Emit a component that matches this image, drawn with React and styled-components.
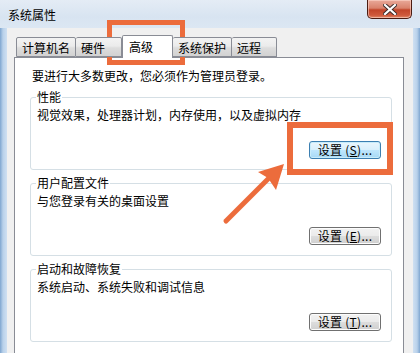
import React from "react";
import styled, { createGlobalStyle } from "styled-components";

const FONT = `"Noto Sans CJK SC", "Liberation Sans", sans-serif`;
const ORANGE = "#ec6c3c";

const GlobalStyle = createGlobalStyle`
  html, body {
    margin: 0;
    padding: 0;
    background: #dce7f3;
  }
  body {
    font-family: ${FONT};
    font-size: 12px;
    color: #000;
  }
`;

const TABS = [
  { label: "计算机名", width: 60 },
  { label: "硬件", width: 46 },
  { label: "高级", width: 51, active: true },
  { label: "系统保护", width: 59 },
  { label: "远程", width: 45 },
];

const GROUPS = [
  {
    title: "性能",
    text: "视觉效果，处理器计划，内存使用，以及虚拟内存",
    key: "S",
    focused: true,
  },
  { title: "用户配置文件", text: "与您登录有关的桌面设置", key: "E" },
  { title: "启动和故障恢复", text: "系统启动、系统失败和调试信息", key: "T" },
];

export default function App() {
  return (
    <>
      <GlobalStyle />
      <StyledWindow>
        <StyledTitleBar>
          <StyledTitle>系统属性</StyledTitle>
          <StyledClose>
            <svg width="14" height="11" viewBox="0 0 14 11">
              <path
                d="M2 1 L12 10 M12 1 L2 10"
                stroke="#3a2a28"
                strokeWidth="4"
                strokeLinecap="square"
              />
              <path
                d="M2 1 L12 10 M12 1 L2 10"
                stroke="#fff"
                strokeWidth="2.2"
                strokeLinecap="square"
              />
            </svg>
          </StyledClose>
        </StyledTitleBar>
        <StyledClient>
          <StyledTabList>
            {TABS.map((tab) => (
              <StyledTab key={tab.label} $active={tab.active} $width={tab.width}>
                {tab.label}
              </StyledTab>
            ))}
          </StyledTabList>
          <StyledPanel>
            <StyledIntro>要进行大多数更改，您必须作为管理员登录。</StyledIntro>
            {GROUPS.map((group) => (
              <StyledGroup key={group.title}>
                <StyledLegend>{group.title}</StyledLegend>
                <StyledGroupText>{group.text}</StyledGroupText>
                <StyledButtonRow>
                  <StyledButton $focused={group.focused}>
                    设置 (<u>{group.key}</u>)...
                  </StyledButton>
                </StyledButtonRow>
              </StyledGroup>
            ))}
          </StyledPanel>
        </StyledClient>
        <StyledOverlay width="420" height="353" viewBox="0 0 420 353">
          <rect x="109.5" y="22.5" width="73" height="40" fill="none" stroke={ORANGE} strokeWidth="5" />
          <rect x="290" y="125" width="100" height="47" fill="none" stroke={ORANGE} strokeWidth="6" />
          <line x1="226" y1="221" x2="272" y2="175" stroke={ORANGE} strokeWidth="5" strokeLinecap="round" />
          <polygon points="284,164 258,172 268,178 276,190" fill={ORANGE} />
        </StyledOverlay>
      </StyledWindow>
    </>
  );
}

const StyledWindow = styled.div`
  position: relative;
  width: 420px;
  height: 353px;
  overflow: hidden;
  display: flex;
  flex-direction: column;
  background: linear-gradient(
    90deg,
    #7fa6d0 0px,
    #b9d1ea 3px,
    #cfe0f2 7px,
    #d6e3f1 50%,
    #cfe0f2 calc(100% - 7px),
    #b9d1ea calc(100% - 3px),
    #7fa6d0 100%
  );
`;

const StyledTitleBar = styled.div`
  height: 28px;
  display: flex;
  align-items: flex-start;
  padding-left: 8px;
  background: linear-gradient(180deg, #e4ecf5 0%, #d8e4f1 60%, #dce7f3 100%);
`;

const StyledTitle = styled.div`
  margin-top: 7px;
  font-size: 12px;
  line-height: 16px;
  color: #000;
`;

const StyledClose = styled.div`
  margin-left: auto;
  margin-right: 8px;
  width: 45px;
  height: 19px;
  box-sizing: border-box;
  border: 1px solid #4a1c12;
  border-top: none;
  border-radius: 0 0 5px 5px;
  display: flex;
  align-items: center;
  justify-content: center;
  background: linear-gradient(
    180deg,
    #e9a99a 0%,
    #d9826c 45%,
    #c2452a 55%,
    #cf5a3c 85%,
    #e08a6a 100%
  );
  box-shadow: inset 0 0 0 1px rgba(255, 220, 210, 0.55);
`;

const StyledClient = styled.div`
  flex: 1;
  margin: 0 7px;
  padding-top: 7px;
  background: #f0f0f0;
  display: flex;
  flex-direction: column;
`;

const StyledTabList = styled.div`
  display: flex;
  align-items: flex-end;
  height: 23px;
  padding-left: 9px;
  position: relative;
  z-index: 1;
  margin-bottom: -1px;
`;

const StyledTab = styled.div`
  box-sizing: border-box;
  width: ${(p) => p.$width}px;
  height: ${(p) => (p.$active ? 23 : 20)}px;
  margin-bottom: ${(p) => (p.$active ? 0 : 1)}px;
  padding: ${(p) => (p.$active ? "3px 0 0 6px" : "2px 0 0 5px")};
  border: 1px solid #898c95;
  border-bottom: ${(p) => (p.$active ? "none" : "1px solid #898c95")};
  border-left-width: ${(p) => (p.$active ? 1 : 0)}px;
  border-radius: 2px 2px 0 0;
  font-size: 12px;
  line-height: 16px;
  white-space: nowrap;
  background: ${(p) =>
    p.$active
      ? "#ffffff"
      : "linear-gradient(180deg, #f3f3f3 0%, #ebebeb 45%, #dddddd 55%, #d2d2d2 100%)"};
  &:first-child {
    border-left-width: 1px;
  }
`;

const StyledPanel = styled.div`
  flex: 1;
  margin: 0 9px 0 7px;
  border: 1px solid #898c95;
  border-bottom: none;
  background: #ffffff;
  padding: 11px 11px 0 15px;
  display: flex;
  flex-direction: column;
  gap: 6px;
`;

const StyledIntro = styled.div`
  line-height: 14px;
  padding-left: 2px;
  margin-bottom: 1px;
`;

const StyledGroup = styled.fieldset`
  margin: 0;
  padding: 4px 10px 10px 6px;
  border: 1px solid #d5dfe5;
  border-radius: 3px;
  min-width: 0;
`;

const StyledLegend = styled.legend`
  padding: 0 1px;
  margin-left: -1px;
  line-height: 14px;
  font-size: 12px;
`;

const StyledGroupText = styled.div`
  line-height: 14px;
`;

const StyledButtonRow = styled.div`
  display: flex;
  justify-content: flex-end;
  margin-top: 19px;
`;

const StyledButton = styled.div`
  box-sizing: border-box;
  width: 72px;
  height: 18px;
  border: 1px solid ${(p) => (p.$focused ? "#3c7fb1" : "#707070")};
  border-radius: 3px;
  display: flex;
  align-items: center;
  justify-content: center;
  font-size: 12px;
  line-height: 16px;
  letter-spacing: 0.3px;
  box-shadow: inset 0 0 0 1px ${(p) => (p.$focused ? "#c8ecfa" : "#fcfcfc")};
  background: ${(p) =>
    p.$focused
      ? "linear-gradient(180deg, #eaf6fd 0%, #d9f0fc 48%, #bee6fd 52%, #a7d9f5 100%)"
      : "linear-gradient(180deg, #f2f2f2 0%, #ebebeb 48%, #dddddd 52%, #cfcfcf 100%)"};
  u {
    text-decoration: underline;
    text-underline-offset: 1px;
  }
`;

const StyledOverlay = styled.svg`
  position: absolute;
  left: 0;
  top: 0;
  pointer-events: none;
`;
